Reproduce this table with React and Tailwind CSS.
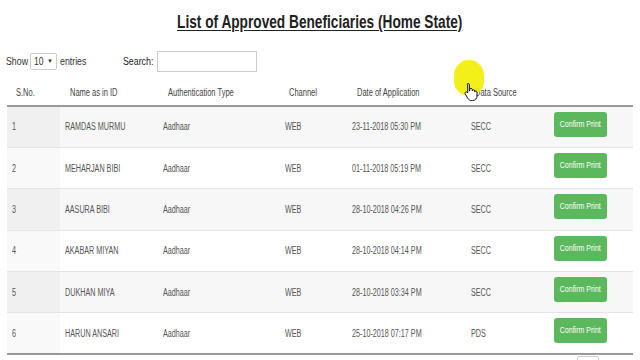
import React from "react";

const rows = [
  ["1", "RAMDAS MURMU", "Aadhaar", "WEB", "23-11-2018 05:30 PM", "SECC"],
  ["2", "MEHARJAN BIBI", "Aadhaar", "WEB", "01-11-2018 05:19 PM", "SECC"],
  ["3", "AASURA BIBI", "Aadhaar", "WEB", "28-10-2018 04:26 PM", "SECC"],
  ["4", "AKABAR MIYAN", "Aadhaar", "WEB", "28-10-2018 04:14 PM", "SECC"],
  ["5", "DUKHAN MIYA", "Aadhaar", "WEB", "28-10-2018 03:34 PM", "SECC"],
  ["6", "HARUN ANSARI", "Aadhaar", "WEB", "25-10-2018 07:17 PM", "PDS"],
];

const font = { fontFamily: "'Liberation Sans', Arial, sans-serif" };

function N({ children }) {
  return <span className="inline-block whitespace-nowrap origin-left scale-x-[0.72]">{children}</span>;
}
function H({ children }) {
  return <span className="inline-block whitespace-nowrap origin-left scale-x-[0.75]">{children}</span>;
}

export default function App() {
  return (
    <div className="relative w-[640px] h-[360px] bg-white overflow-hidden text-[#555]" style={font}>
      <div className="flex justify-center pt-[11px] h-[44px]">
        <h1 className="text-[18px] leading-[22px] font-bold underline text-[#222] underline-offset-2 whitespace-nowrap origin-center scale-x-[0.76]">
          List of Approved Beneficiaries (Home State)
        </h1>
      </div>
      <div className="flex items-center h-[24px] mt-[5px] pl-[6px] text-[10px] text-[#333]">
        <span className="inline-block origin-left scale-x-[0.88] w-[22px]">Show</span>
        <div className="ml-[2px] w-[27px] h-[17px] border border-[#ccc] rounded-[2px] flex items-center justify-between px-[3px]">
          <span className="inline-block origin-left scale-x-[0.85]">10</span>
          <span className="text-[6px]">▼</span>
        </div>
        <span className="ml-[3px] inline-block origin-left scale-x-[0.88] w-[63px]">entries</span>
        <span className="inline-block origin-left scale-x-[0.88] w-[34px] text-[#222]">Search:</span>
        <div className="w-[100px] h-[21px] border border-[#ccc] bg-white" />
      </div>
      <table className="ml-[7px] mt-[6px] w-[626px] border-collapse text-[10px] table-fixed">
        <colgroup>
          <col className="w-[53px]" />
          <col className="w-[98px]" />
          <col className="w-[122px]" />
          <col className="w-[67px]" />
          <col className="w-[119px]" />
          <col className="w-[83px]" />
          <col className="w-[84px]" />
        </colgroup>
        <thead>
          <tr className="h-[27px] text-[#444] border-b-2 border-[#999]">
            <th className="text-left font-normal pl-[9px]"><H>S.No.</H></th>
            <th className="text-left font-normal pl-[10px]"><H>Name as in ID</H></th>
            <th className="text-left font-normal pl-[10px]"><H>Authentication Type</H></th>
            <th className="text-left font-normal pl-[9px]"><H>Channel</H></th>
            <th className="text-left font-normal pl-[10px]"><H>Date of Application</H></th>
            <th className="text-left font-normal pl-[9px]"><H>Data Source</H></th>
            <th />
          </tr>
        </thead>
        <tbody>
          {rows.map((r, i) => {
            const odd = i % 2 === 0;
            return (
              <tr key={i} className={`h-[41.4px] border-t border-[#e4e4e4] ${odd ? "bg-[#f7f7f7]" : "bg-white"}`}>
                <td className={`pl-[5px] ${odd ? "bg-[#f0f0f0]" : "bg-[#f9f9f9]"}`}><N>{r[0]}</N></td>
                <td className="pl-[5px]"><N>{r[1]}</N></td>
                <td className="pl-[5px]"><N>{r[2]}</N></td>
                <td className="pl-[5px]"><N>{r[3]}</N></td>
                <td className="pl-[5px]"><N>{r[4]}</N></td>
                <td className="pl-[5px]"><N>{r[5]}</N></td>
                <td className="pl-[5px] align-top pt-[5px]">
                  <div className="w-[53px] h-[25px] rounded-[3px] bg-[#5cb85c] text-white text-[9px] flex justify-center pt-[6px]">
                    <span className="inline-block whitespace-nowrap origin-center scale-x-[0.78]">Confirm Print</span>
                  </div>
                </td>
              </tr>
            );
          })}
          <tr className="border-t-2 border-[#999] h-0"><td colSpan={7} /></tr>
        </tbody>
      </table>
      <div className="absolute left-[577px] top-[356px] w-[22px] h-[8px] border border-[#ccc] rounded-[2px]" />
      <div className="absolute left-[454px] top-[60px] w-[30px] h-[36px] rounded-full bg-[#f2ee00] opacity-90" />
      <svg className="absolute left-[464px] top-[82px]" width="14" height="19" viewBox="0 0 14 19">
        <path d="M4 1.5c.8 0 1.4.6 1.4 1.4V9l.3-.1V7.6c0-.7.6-1.2 1.3-1.2s1.3.5 1.3 1.2v1.2c.1-.6.6-1 1.2-1 .7 0 1.2.5 1.2 1.2v.8c.1-.5.6-.8 1.1-.8.7 0 1.2.5 1.2 1.2v3.8c0 2.3-1.6 4.5-4.3 4.5H7.3c-1.5 0-2.6-.8-3.4-2L1.3 12c-.5-.7-.3-1.5.3-1.9.6-.4 1.3-.2 1.8.4l.3.5V2.9C2.7 2.1 3.3 1.5 4 1.5z" fill="#fff" stroke="#111" strokeWidth="1" />
      </svg>
    </div>
  );
}
